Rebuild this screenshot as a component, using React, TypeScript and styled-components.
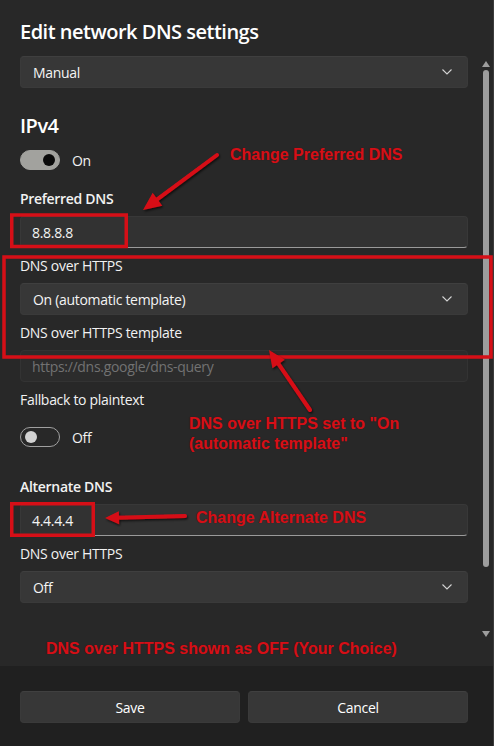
import * as React from "react";
import styled, { createGlobalStyle } from "styled-components";

const GlobalStyle = createGlobalStyle`
  html, body {
    margin: 0;
    padding: 0;
    background: #282828;
  }
  * {
    box-sizing: border-box;
  }
`;

const Dialog = styled.div`
  width: 494px;
  height: 746px;
  display: flex;
  flex-direction: column;
  background: #282828;
  font-family: "Open Sans", "Noto Sans", sans-serif;
  letter-spacing: -0.3px;
  color: #ffffff;
  border-right: 1px solid #3c3c3c;
  overflow: hidden;
`;

const Body = styled.div`
  position: relative;
  flex: 1;
  display: flex;
`;

const Content = styled.div`
  flex: 1;
  display: flex;
  flex-direction: column;
  padding: 18px 10px 0 20px;
`;

const Title = styled.h1<{ $top?: number }>`
  margin: ${(p) => p.$top ?? 0}px 0 0 0;
  font-size: 20px;
  line-height: 28px;
  font-weight: 600;
  letter-spacing: -0.5px;
  color: #ffffff;
`;

const Label = styled.div<{ $top: number; $bold?: boolean }>`
  margin-top: ${(p) => p.$top}px;
  margin-bottom: 7px;
  font-size: 14px;
  line-height: 20px;
  font-weight: ${(p) => (p.$bold ? 600 : 400)};
  color: #f2f2f2;
`;

const Select = styled.div<{ $top?: number }>`
  margin-top: ${(p) => p.$top ?? 0}px;
  height: 32px;
  display: flex;
  align-items: center;
  justify-content: space-between;
  padding: 0 15px 0 12px;
  background: #373737;
  border: 1px solid #3a3a3a;
  border-top-color: #3f3f3f;
  border-radius: 4px;
  font-size: 14px;
  color: #f4f4f4;
`;

const TextBox = styled.div<{ $disabled?: boolean }>`
  height: 32px;
  display: flex;
  align-items: center;
  padding: 0 11px;
  background: ${(p) => (p.$disabled ? "#2c2c2c" : "#323232")};
  border: 1px solid ${(p) => (p.$disabled ? "#333333" : "#383838")};
  border-bottom-color: ${(p) => (p.$disabled ? "#333333" : "#9a9a9a")};
  border-radius: 4px;
  font-size: 14px;
  color: ${(p) => (p.$disabled ? "#727272" : "#f4f4f4")};
`;

const ToggleRow = styled.div<{ $top: number }>`
  margin-top: ${(p) => p.$top}px;
  display: flex;
  align-items: center;
  gap: 12px;
  font-size: 14px;
  color: #f2f2f2;
`;

const Track = styled.div<{ $on: boolean }>`
  width: 40px;
  height: 20px;
  border-radius: 10px;
  display: flex;
  align-items: center;
  justify-content: ${(p) => (p.$on ? "flex-end" : "flex-start")};
  padding: 0 4px;
  background: ${(p) => (p.$on ? "#a2a29e" : "transparent")};
  border: 1px solid ${(p) => (p.$on ? "#a2a29e" : "#a0a0a0")};
`;

const Knob = styled.div<{ $on: boolean }>`
  width: 12px;
  height: 12px;
  border-radius: 50%;
  background: ${(p) => (p.$on ? "#0a0a0a" : "#d2d2d2")};
`;

const ScrollRail = styled.div`
  width: 15px;
  display: flex;
  flex-direction: column;
  align-items: center;
  padding-top: 61px;
`;

const ScrollThumb = styled.div`
  width: 6px;
  height: 497px;
  margin-top: 3px;
  border-radius: 3px;
  background: #9d9d9d;
`;

const ScrollGap = styled.div`
  height: 64px;
`;

const Footer = styled.div`
  height: 80px;
  flex: none;
  display: grid;
  grid-template-columns: 1fr 1fr;
  gap: 8px;
  padding: 25px 25px 23px 20px;
  background: #202020;
`;

const Button = styled.div`
  height: 32px;
  display: flex;
  align-items: center;
  justify-content: center;
  background: #373737;
  border: 1px solid #3a3a3a;
  border-top-color: #404040;
  border-radius: 4px;
  font-size: 14px;
  color: #ffffff;
`;

const Overlay = styled.svg`
  position: absolute;
  inset: 0;
  pointer-events: none;
`;

const Note = styled.div<{ $x: number; $y: number }>`
  position: absolute;
  left: ${(p) => p.$x}px;
  top: ${(p) => p.$y}px;
  font-family: "Liberation Sans", Arial, sans-serif;
  font-weight: 700;
  font-size: 16px;
  line-height: 20px;
  letter-spacing: 0;
  color: #d60f17;
  text-shadow: 0 0 1px rgba(90, 0, 0, 0.6);
  white-space: nowrap;
  pointer-events: none;
`;

const Chevron = () => (
  <svg width="10" height="6" viewBox="0 0 10 6">
    <polyline
      points="0.5,0.5 5,5 9.5,0.5"
      fill="none"
      stroke="#d4d4d4"
      strokeWidth="1.1"
    />
  </svg>
);

const Triangle = ({ down }: { down?: boolean }) => (
  <svg width="8" height="6" viewBox="0 0 8 6">
    <polygon points={down ? "0,0 8,0 4,6" : "4,0 8,6 0,6"} fill="#9d9d9d" />
  </svg>
);

const Toggle = ({ on, top }: { on: boolean; top: number }) => (
  <ToggleRow $top={top}>
    <Track $on={on}>
      <Knob $on={on} />
    </Track>
    {on ? "On" : "Off"}
  </ToggleRow>
);

interface ArrowProps {
  tail: [number, number];
  tip: [number, number];
  len: number;
  half: number;
}

const Arrow = ({ tail, tip, len, half }: ArrowProps) => {
  const dx = tip[0] - tail[0];
  const dy = tip[1] - tail[1];
  const d = Math.hypot(dx, dy);
  const ux = dx / d;
  const uy = dy / d;
  const bx = tip[0] - ux * len;
  const by = tip[1] - uy * len;
  const head = `${tip[0]},${tip[1]} ${bx - uy * half},${by + ux * half} ${
    bx + uy * half
  },${by - ux * half}`;
  return (
    <g filter="url(#shade)">
      <line
        x1={tail[0]}
        y1={tail[1]}
        x2={bx + ux * 2}
        y2={by + uy * 2}
        stroke="#d60f17"
        strokeWidth="4"
        strokeLinecap="round"
      />
      <polygon points={head} fill="#d60f17" />
    </g>
  );
};

const App = () => {
  return (
    <>
      <GlobalStyle />
      <Dialog>
        <Body>
          <Content>
            <Title>Edit network DNS settings</Title>
            <Select $top={10}>
              Manual
              <Chevron />
            </Select>
            <Title $top={24}>IPv4</Title>
            <Toggle on top={10} />

            <Label $top={19} $bold>
              Preferred DNS
            </Label>
            <TextBox>8.8.8.8</TextBox>

            <Label $top={8}>DNS over HTTPS</Label>
            <Select>
              On (automatic template)
              <Chevron />
            </Select>

            <Label $top={8}>DNS over HTTPS template</Label>
            <TextBox $disabled>https://dns.google/dns-query</TextBox>

            <Label $top={8}>Fallback to plaintext</Label>
            <Toggle on={false} top={10} />

            <Label $top={30} $bold>
              Alternate DNS
            </Label>
            <TextBox>4.4.4.4</TextBox>

            <Label $top={8}>DNS over HTTPS</Label>
            <Select>
              Off
              <Chevron />
            </Select>
          </Content>

          <ScrollRail>
            <Triangle />
            <ScrollThumb />
            <ScrollGap />
            <Triangle down />
          </ScrollRail>

          <Overlay width="494" height="666">
            <defs>
              <filter id="shade" x="-20%" y="-20%" width="140%" height="140%">
                <feDropShadow
                  dx="1"
                  dy="1.5"
                  stdDeviation="1.2"
                  floodColor="#000"
                  floodOpacity="0.7"
                />
              </filter>
            </defs>
            <g fill="none" stroke="#d60f17" strokeWidth="3.5">
              <rect x="11.75" y="215" width="114.5" height="31.5" />
              <rect x="4" y="257" width="487" height="100" />
              <rect x="11.75" y="503.75" width="81.5" height="31.5" />
            </g>
            <Arrow tail={[217, 155]} tip={[143, 210]} len={18} half={8} />
            <Arrow tail={[310, 410]} tip={[269, 350]} len={17} half={7.5} />
            <Arrow tail={[185, 516]} tip={[105, 518]} len={14} half={6.5} />
          </Overlay>

          <Note $x={230} $y={145}>
            Change Preferred DNS
          </Note>
          <Note $x={189} $y={414}>
            DNS over HTTPS set to "On
            <br />
            (automatic template"
          </Note>
          <Note $x={196} $y={508}>
            Change Alternate DNS
          </Note>
          <Note $x={46} $y={639}>
            DNS over HTTPS shown as OFF (Your Choice)
          </Note>
        </Body>

        <Footer>
          <Button>Save</Button>
          <Button>Cancel</Button>
        </Footer>
      </Dialog>
    </>
  );
};

export default App;
